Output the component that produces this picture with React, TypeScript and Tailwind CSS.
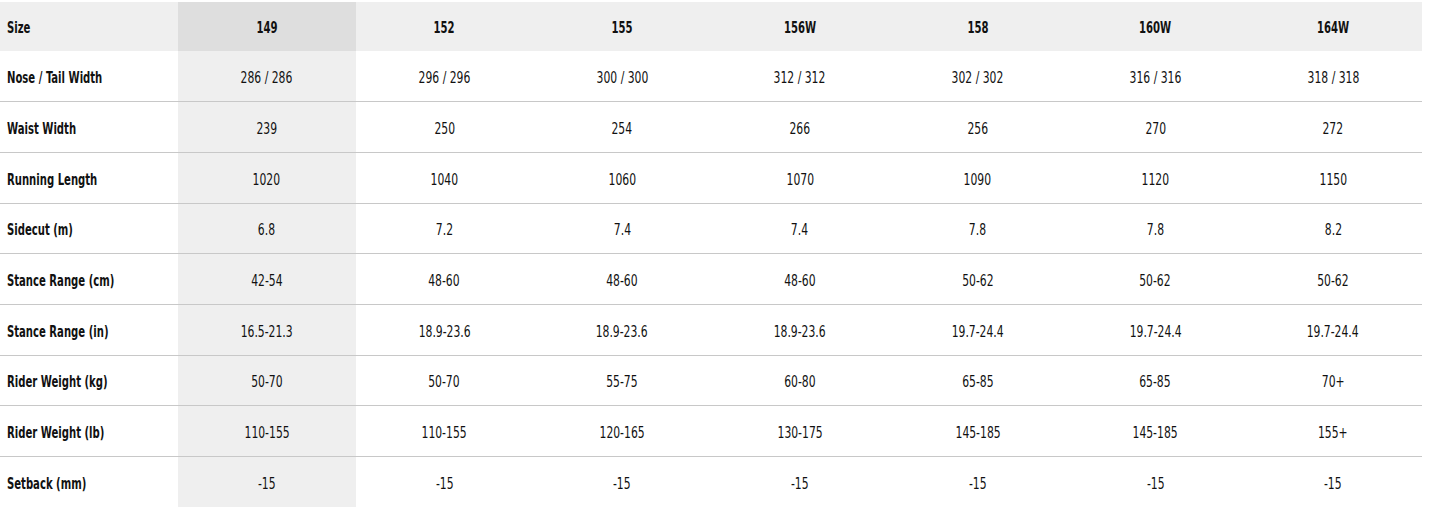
const sizes = ["149", "152", "155", "156W", "158", "160W", "164W"];

const rows: { label: string; values: string[]; h: string }[] = [
  { label: "Nose / Tail Width", values: ["286 / 286", "296 / 296", "300 / 300", "312 / 312", "302 / 302", "316 / 316", "318 / 318"], h: "h-[51px]" },
  { label: "Waist Width", values: ["239", "250", "254", "266", "256", "270", "272"], h: "h-[51px]" },
  { label: "Running Length", values: ["1020", "1040", "1060", "1070", "1090", "1120", "1150"], h: "h-[51px]" },
  { label: "Sidecut (m)", values: ["6.8", "7.2", "7.4", "7.4", "7.8", "7.8", "8.2"], h: "h-[50px]" },
  { label: "Stance Range (cm)", values: ["42-54", "48-60", "48-60", "48-60", "50-62", "50-62", "50-62"], h: "h-[51px]" },
  { label: "Stance Range (in)", values: ["16.5-21.3", "18.9-23.6", "18.9-23.6", "18.9-23.6", "19.7-24.4", "19.7-24.4", "19.7-24.4"], h: "h-[51px]" },
  { label: "Rider Weight (kg)", values: ["50-70", "50-70", "55-75", "60-80", "65-85", "65-85", "70+"], h: "h-[50px]" },
  { label: "Rider Weight (lb)", values: ["110-155", "110-155", "120-165", "130-175", "145-185", "145-185", "155+"], h: "h-[51px]" },
  { label: "Setback (mm)", values: ["-15", "-15", "-15", "-15", "-15", "-15", "-15"], h: "h-[50px]" },
];

export default function App() {
  return (
    <div
      className="w-[1435px] h-[516px] bg-white pt-[2px] text-[#111] text-[16px]"
      style={{ fontFamily: '"DejaVu Sans Condensed", "Liberation Sans", sans-serif', fontStretch: "condensed" }}
    >
      <div className="w-[1422px]">
        {/* Header */}
        <div className="grid grid-cols-8 h-[49px] bg-[#efefef] font-bold">
          <div className="flex items-center pl-[7px] pt-[3px]">
            <span className="inline-block origin-left scale-x-[0.7]">Size</span>
          </div>
          {sizes.map((s, i) => (
            <div key={s} className={`flex items-center justify-center pt-[3px] ${i === 0 ? "bg-[#dedede]" : ""}`}>
              <span className="inline-block scale-x-[0.7]">{s}</span>
            </div>
          ))}
        </div>

        {/* Body */}
        {rows.map((row, r) => (
          <div
            key={row.label}
            className={`grid grid-cols-8 ${row.h} ${r < rows.length - 1 ? "border-b border-[#c8c8c8]" : ""}`}
          >
            <div className="flex items-center pl-[7px] pt-[3px] font-bold">
              <span className="inline-block origin-left scale-x-[0.7] whitespace-nowrap">{row.label}</span>
            </div>
            {row.values.map((v, i) => (
              <div key={i} className={`flex items-center justify-center pt-[3px] ${i === 0 ? "bg-[#efefef]" : ""}`}>
                <span className="inline-block scale-x-[0.75] whitespace-nowrap">{v}</span>
              </div>
            ))}
          </div>
        ))}
      </div>
    </div>
  );
}
